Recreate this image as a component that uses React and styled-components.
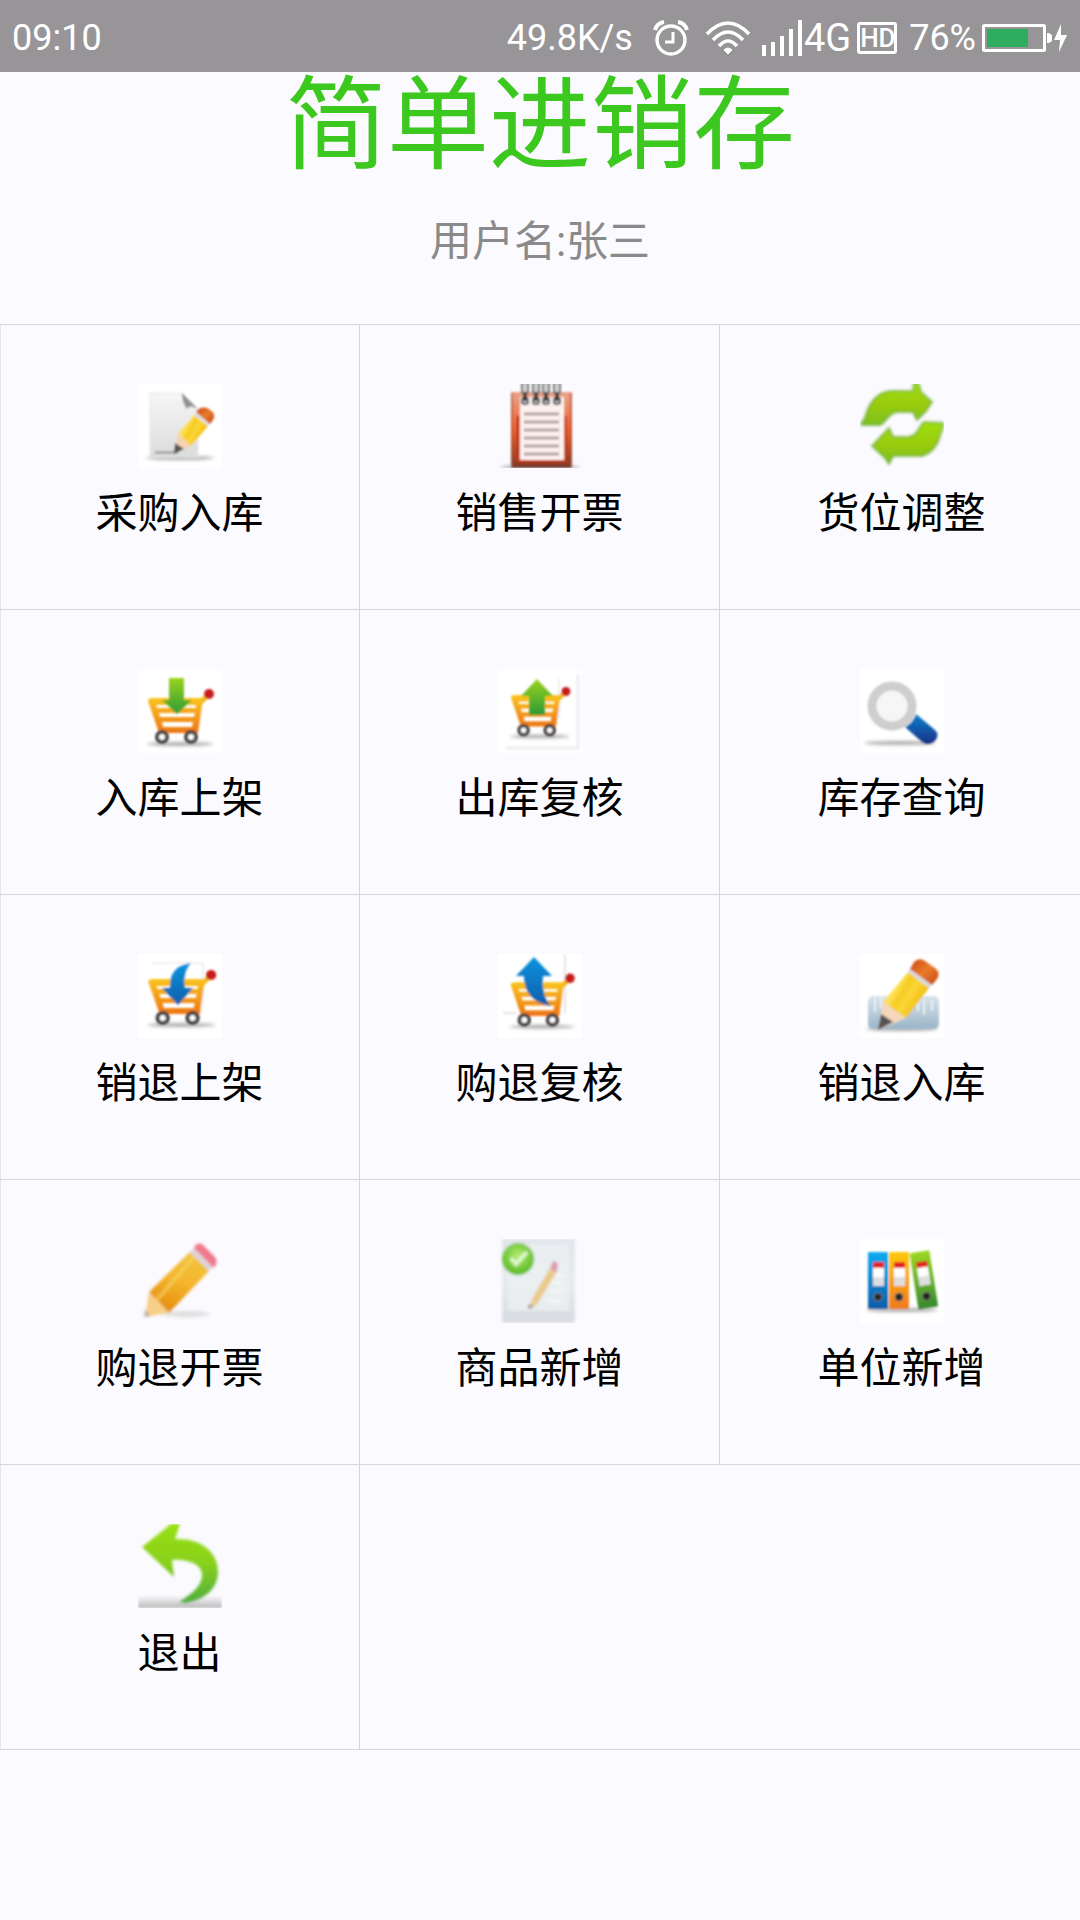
import React from 'react'
import styled, { createGlobalStyle } from 'styled-components'

const GlobalStyle = createGlobalStyle`
  * {
    box-sizing: border-box;
  }
  body {
    margin: 0;
    background: #fbfaff;
    font-family: Roboto, 'Noto Sans CJK SC', sans-serif;
  }
`

const StatusBar = styled.header`
  display: flex;
  align-items: center;
  justify-content: space-between;
  height: 72px;
  padding: 3px 12px 0;
  background: #989598;
  color: white;
  font-size: 36px;
  line-height: 42px;
`

const StatusGroup = styled.div`
  display: flex;
  align-items: center;
`

const StatusIcon = styled.svg`
  display: block;
  flex: none;
  margin-left: ${props => props.$gap}px;
`

const Network = styled.span`
  margin-left: 2px;
  font-size: 38px;
`

const HdBadge = styled.span`
  margin: 0 12px 0 6px;
  width: 40px;
  height: 32px;
  border: 3px solid white;
  border-radius: 3px;
  font-size: 26px;
  font-weight: 500;
  line-height: 27px;
  text-align: center;
`

const Title = styled.h1`
  margin: 0;
  color: #3dc81f;
  font-size: 102px;
  font-weight: 400;
  line-height: 108px;
  text-align: center;
`

const UserName = styled.p`
  margin: 32px 0 52px;
  color: #8a8a8a;
  font-size: 42px;
  line-height: 60px;
  text-align: center;
`

const Menu = styled.nav`
  display: grid;
  grid-template-columns: repeat(3, 1fr);
  border: solid #d6d6da;
  border-width: 1px 0;
`

const MenuItem = styled.button`
  display: flex;
  flex-direction: column;
  align-items: center;
  padding: 59px 0 65px;
  border: solid #d6d6da;
  border-width: 0 1px ${props => (props.$last ? 0 : 1)}px 0;
  background: none;
  color: black;
  font: inherit;
  font-size: 42px;
  line-height: 60px;
  cursor: pointer;

  &:nth-child(3n + 1) {
    box-shadow: inset 1px 0 #e6e5ea;
  }
  &:nth-child(3n) {
    padding-left: 3px;
    border-right: 0;
  }
`

const Picture = styled.svg`
  display: block;
  width: 84px;
  height: 84px;
  margin-bottom: 16px;
`

const RowEnd = styled.div`
  grid-column: span 2;
`

function Gradients() {
  const list = [
    ['paper', '#f6f6f6', '#dcdcdc'],
    ['frame', '#e8a48c', '#7a3a2a', '#f0602c'],
    ['leaf', '#9ce010', '#7cc020', '#9acc0a'],
    ['back', '#98e010', '#4fae3e', '#88d01c'],
    ['green', '#9ad31f', '#2e9a35'],
    ['cart', '#f9c41c', '#ee7518'],
    ['blue', '#0c93dd', '#0a5fab'],
    ['handle', '#0e82cf', '#152f85'],
    ['ruler', '#d9e4eb', '#9ab5c7'],
    ['binderBlue', '#12aaf0', '#0a5da8'],
    ['binderGold', '#ffc90a', '#f07a20'],
    ['binderGreen', '#9bd822', '#35892f'],
    ['note', '#e1e4ea', '#d9dce1', '#e6ecee'],
    ['floor', '#c8c8c800', '#b4b4b4']
  ]
  return (
    <svg width="0" height="0" style={{ display: 'block' }} aria-hidden="true">
      <defs>
        {list.map(([id, from, to, mid]) => (
          <linearGradient key={id} id={id} x1="0" y1="0" x2="0" y2="1">
            <stop offset="0" stopColor={from} />
            {mid && <stop offset="0.5" stopColor={mid} />}
            <stop offset="1" stopColor={to} />
          </linearGradient>
        ))}
        <linearGradient id="wood" x1="0" y1="0" x2="1" y2="0.6">
          <stop offset="0.1" stopColor="#f4c02a" />
          <stop offset="0.35" stopColor="#ffe45c" />
          <stop offset="0.5" stopColor="#f6cb22" />
          <stop offset="0.65" stopColor="#fbd636" />
          <stop offset="1" stopColor="#efb400" />
        </linearGradient>
        <linearGradient id="amber" x1="0.8" y1="0" x2="0.4" y2="1">
          <stop offset="0" stopColor="#f2c53a" />
          <stop offset="0.5" stopColor="#f4b52e" />
          <stop offset="1" stopColor="#e78d0c" />
        </linearGradient>
        <linearGradient id="eraser" x1="0" y1="0" x2="1" y2="1">
          <stop offset="0" stopColor="#c94a12" />
          <stop offset="0.5" stopColor="#ea7a2c" />
          <stop offset="1" stopColor="#c8440e" />
        </linearGradient>
        <radialGradient id="ball" cx="0.5" cy="0.4" r="0.6">
          <stop offset="0" stopColor="#b5ec72" />
          <stop offset="1" stopColor="#55b81d" />
        </radialGradient>
        <filter id="soft" x="-10%" y="-10%" width="120%" height="120%">
          <feGaussianBlur stdDeviation="0.9" />
        </filter>
        <filter id="softer" x="-10%" y="-10%" width="120%" height="120%">
          <feGaussianBlur stdDeviation="1.5" />
        </filter>
        <filter id="shade" x="-20%" y="-200%" width="140%" height="500%">
          <feGaussianBlur stdDeviation="1.6" />
        </filter>
      </defs>
    </svg>
  )
}

function Shadow({ y, x = 42, rx = 34 }) {
  return <ellipse cx={x} cy={y} rx={rx} ry="2" fill="#aaa" filter="url(#shade)" />
}

function Cart({ move }) {
  return (
    <g transform={move}>
      <Shadow x={42} y={75} rx={33} />
      <path d="M61 35L70 26" stroke="#f3b71d" strokeWidth="5" />
      <path
        fill="url(#cart)"
        fillRule="evenodd"
        d="M14 29H65L60 64H21L10 32Q10 29 14 29ZM18 36L19 39H58V36ZM21 44L22 48H56L57 44ZM24 53L25 58H54L55 53Z"
      />
      <circle cx="71" cy="25" r="5" fill="#c61a1c" />
      <circle cx="24" cy="68" r="5" fill="#fff" stroke="#484343" strokeWidth="4" />
      <circle cx="53" cy="68" r="5" fill="#fff" stroke="#484343" strokeWidth="4" />
    </g>
  )
}

function Purchase() {
  return (
    <>
      <Shadow y={74} />
      <path d="M12 9H44L60 25V73H12Z" fill="url(#paper)" stroke="#e8e8e8" />
      <path d="M17 67H40V70H17Z" fill="#aaa" />
      <path d="M44 9L60 25Q52 20 49 25Q44 19 44 9Z" fill="#929292" />
      <path d="M56 31L70 42L53 62L40 49Z" fill="url(#wood)" />
      <path d="M40 49L53 62L37 69Z" fill="#f4d3ae" />
      <path d="M37 59L46 65L36 70Z" fill="#555" />
      <path d="M56 31L60 27L74 38L70 42Z" fill="#dedede" />
      <path d="M58 28Q63 21 71 25Q79 30 75 36L72 40Z" fill="url(#eraser)" />
    </>
  )
}

function Notepad() {
  return (
    <>
      <Shadow y={83} rx={40} />
      <rect x="13" y="8" width="61" height="76" fill="url(#frame)" />
      <path d="M14 9V84M73 9V84" stroke="#a8503c" strokeWidth="2" opacity="0.6" />
      <path d="M20 32V77H67V32" stroke="#c43408" strokeWidth="3" fill="none" />
      <rect x="22" y="13" width="44" height="63" fill="#fcf1ef" />
      <path
        d="M26 30H61M26 38H61M26 46H61M26 54H61M26 62H61M26 70H61"
        stroke="#b4a3a2"
        strokeWidth="3"
      />
      {[27, 38, 48, 59].map(x => (
        <g key={x}>
          <rect x={x - 3} y="-3" width="6" height="12" fill="#d0d0d0" stroke="#777" strokeWidth="2" />
          <rect x={x - 3} y="14" width="6" height="6" rx="2" fill="#c4c4c4" stroke="#555" strokeWidth="2" />
          <path d={`M${x} 8V17`} stroke="#222" strokeWidth="3" />
        </g>
      ))}
    </>
  )
}

function Swap() {
  return (
    <g fill="url(#leaf)" stroke="#69a93a" strokeOpacity="0.7" strokeWidth="2">
      <path d="M1 39C6 36 5 29 10 21C15 12 22 8 30 7H53L54 -2H58L61 8L72 18L66 27L57 36L53 28H37C28 29 25 40 20 41H2Z" />
      <path d="M12 62L29 44L33 53H48C58 52 58 43 64 38L83 39C84 44 81 47 80 52C77 63 71 69 62 72H33L29 80L25 74Z" />
    </g>
  )
}

function CartIn() {
  return (
    <>
      <Cart />
      <path d="M31 9H46V31H54L39 45L24 31H31Z" fill="url(#green)" />
    </>
  )
}

function CartOut() {
  return (
    <>
      <path d="M8 79H80V6" fill="none" stroke="#ededef" strokeWidth="3" />
      <path d="M61 9V50" fill="none" stroke="#eee" strokeWidth="2" />
      <Cart move="translate(4 0) scale(0.9)" />
      <path d="M39 10L55 27H47V46H31V27H23Z" fill="url(#green)" />
    </>
  )
}

function Search() {
  return (
    <>
      <Shadow y={74} rx={36} x={40} />
      <circle cx="32" cy="37" r="20" fill="#f6f6f6" stroke="#cecece" strokeWidth="9" />
      <path d="M56 45L75 61Q80 66 75 72Q69 78 62 73L45 58Q53 54 56 45Z" fill="url(#handle)" />
    </>
  )
}

function ReturnIn() {
  return (
    <>
      <path d="M14 9H65V54" fill="none" stroke="#f2f2f2" strokeWidth="2" />
      <Cart move="translate(0 -4) scale(1.03 1)" />
      <path d="M53 9C38 11 31 20 32 34H24L40 51L55 34H47C45 25 47 15 53 9Z" fill="url(#blue)" />
    </>
  )
}

function ReturnOut() {
  return (
    <>
      <path d="M67 0V59M5 59H18" fill="none" stroke="#e4e4e6" strokeWidth="2" />
      <Cart move="translate(3 0) scale(0.97)" />
      <path d="M36 3L54 22H45C44 33 46 46 53 52C36 49 26 39 26 22H18Z" fill="url(#blue)" />
    </>
  )
}

function RulerPencil() {
  return (
    <>
      <Shadow y={75} rx={36} />
      <rect x="8" y="42" width="71" height="33" rx="5" fill="url(#ruler)" />
      <path
        d="M15 43V58M21 43V54M58 46V57M64 46V61M72 46V57"
        stroke="#e9f0f4"
        strokeWidth="2"
      />
      <path d="M48 18L69 34L46 64L23 48Z" fill="url(#wood)" />
      <path d="M23 48L46 64L18 76Z" fill="#f5d7ba" />
      <path d="M21 60L33 68L18 76Z" fill="#555" />
      <path d="M48 18L51 13L73 30L69 34Z" fill="#d5d8dc" />
      <path d="M50 15L54 8Q59 3 65 7L75 14Q81 19 77 25L72 31Z" fill="url(#eraser)" />
    </>
  )
}

function Pencil() {
  return (
    <>
      <ellipse cx="48" cy="75" rx="24" ry="3" fill="#ddd" filter="url(#shade)" />
      <path d="M52 13L71 32L31 74L11 53Z" fill="url(#amber)" />
      <path d="M56 18L18 62" stroke="#f8d564" strokeWidth="4" opacity="0.6" />
      <path d="M11 53L31 74L7 78Z" fill="#f8cf88" />
      <path d="M7 71L13 77L6 78Z" fill="#bdb2a6" />
      <path d="M52 13L57 8L76 27L71 32Z" fill="#ddd4db" />
      <path d="M56 9Q59 2 65 6L76 17Q81 22 76 29Z" fill="#f0788b" />
    </>
  )
}

function AddGoods() {
  return (
    <>
      <rect x="4" y="0" width="73" height="84" fill="url(#note)" />
      <path d="M10 5H71V72H10Z" fill="#edf1f2" opacity="0.7" />
      <path d="M54 36H66M50 44H65M52 52H66M50 62H64" stroke="#f8fafa" strokeWidth="2" />
      <path d="M7 75H75" stroke="#d4dade" strokeWidth="3" />
      <path d="M52 29L58 34L39 65L32 69L34 60Z" fill="#eac98a" />
      <path d="M31 65L36 68L30 70Z" fill="#948a7c" />
      <path d="M52 29L55 22Q60 22 60 28L58 34Z" fill="#dc9bb4" />
      <circle cx="20" cy="20" r="16" fill="url(#ball)" />
      <path d="M13 19L18 25L29 13" fill="none" stroke="#e2f9cd" strokeWidth="4" />
    </>
  )
}

function Binder({ fill, x }) {
  return (
    <g transform={`translate(${x} 0)`}>
      <rect x="0" y="13" width="20" height="57" rx="1" fill={fill} />
      <rect x="5" y="23" width="11" height="6" fill="#e22223" />
      <rect x="5" y="29" width="11" height="18" fill="#fff" />
      <rect x="5" y="38" width="11" height="9" fill="#dedede" />
      <circle cx="10" cy="58" r="4" fill="#222" stroke="#777" />
    </g>
  )
}

function Binders() {
  return (
    <>
      <Shadow y={71} rx={36} />
      <Binder fill="url(#binderBlue)" x={8} />
      <Binder fill="url(#binderGold)" x={29} />
      <g transform="rotate(-9 60 42)">
        <Binder fill="url(#binderGreen)" x={54} />
      </g>
    </>
  )
}

function Back() {
  return (
    <>
      <rect x="0" y="71" width="84" height="13" fill="url(#floor)" />
      <path
        d="M4 23L33 0H42L37 15C62 14 80 27 80 48C80 65 66 76 48 79L41 78C57 68 65 60 64 49C62 40 50 35 34 36L36 53Z"
        fill="url(#back)"
      />
    </>
  )
}

const items = [
  { label: '采购入库', Icon: Purchase, plate: true },
  { label: '销售开票', Icon: Notepad },
  { label: '货位调整', Icon: Swap, blur: 'softer' },
  { label: '入库上架', Icon: CartIn, plate: true },
  { label: '出库复核', Icon: CartOut, plate: true },
  { label: '库存查询', Icon: Search, plate: true },
  { label: '销退上架', Icon: ReturnIn, plate: true },
  { label: '购退复核', Icon: ReturnOut, plate: true },
  { label: '销退入库', Icon: RulerPencil, plate: true },
  { label: '购退开票', Icon: Pencil, blur: 'softer' },
  { label: '商品新增', Icon: AddGoods, blur: 'softer' },
  { label: '单位新增', Icon: Binders, plate: true },
  { label: '退出', Icon: Back, blur: 'softer' }
]

function Status() {
  return (
    <StatusBar>
      <span>09:10</span>
      <StatusGroup>
        <span>49.8K/s</span>
        <StatusIcon $gap={20} width="36" height="36" viewBox="0 0 36 36" fill="none" stroke="white">
          <circle cx="18" cy="20" r="14" strokeWidth="3.4" />
          <path d="M20 12V22H12" strokeWidth="3" />
          <path d="M2 10Q4 3 11 2M34 10Q32 3 25 2" strokeWidth="4" />
        </StatusIcon>
        <StatusIcon $gap={16} width="46" height="36" viewBox="0 0 46 36" fill="none" stroke="white" strokeWidth="3.6">
          <path d="M2 14Q23 -8 44 14M8 20Q23 4 38 20M14 26Q23 16 32 26" />
          <path d="M23 34L19 30Q23 26 27 30Z" fill="white" strokeWidth="1" />
        </StatusIcon>
        <StatusIcon $gap={11} width="40" height="36" viewBox="0 0 40 36" fill="white">
          <path d="M0 25H4V36H0ZM9 22H13V36H9ZM18 16H22V36H18ZM27 9H31V36H27ZM36 0H40V36H36Z" />
        </StatusIcon>
        <Network>4G</Network>
        <HdBadge>HD</HdBadge>
        <span>76%</span>
        <StatusIcon $gap={6} width="86" height="28" viewBox="0 0 86 28" fill="white">
          <rect x="1.5" y="1.5" width="61" height="25" rx="1" fill="none" stroke="white" strokeWidth="3" />
          <rect x="5" y="5" width="41" height="18" fill="#2fad5e" />
          <path d="M65 9H67L70 11V17L67 19H65Z" />
          <path d="M79 0L72 16H78L77 28L85 11H79Z" />
        </StatusIcon>
      </StatusGroup>
    </StatusBar>
  )
}

function App() {
  return (
    <React.Fragment>
      <GlobalStyle />
      <Gradients />
      <Status />
      <main>
        <Title>简单进销存</Title>
        <UserName>用户名:张三</UserName>
        <Menu>
          {items.map(({ label, Icon, plate, blur = 'soft' }, i) => (
            <MenuItem key={label} type="button" $last={i === items.length - 1}>
              <Picture viewBox="0 0 84 84" aria-hidden="true">
                {plate && <rect width="84" height="84" fill="white" />}
                <g filter={`url(#${blur})`}>
                  <Icon />
                </g>
              </Picture>
              {label}
            </MenuItem>
          ))}
          <RowEnd />
        </Menu>
      </main>
    </React.Fragment>
  )
}

export default App
